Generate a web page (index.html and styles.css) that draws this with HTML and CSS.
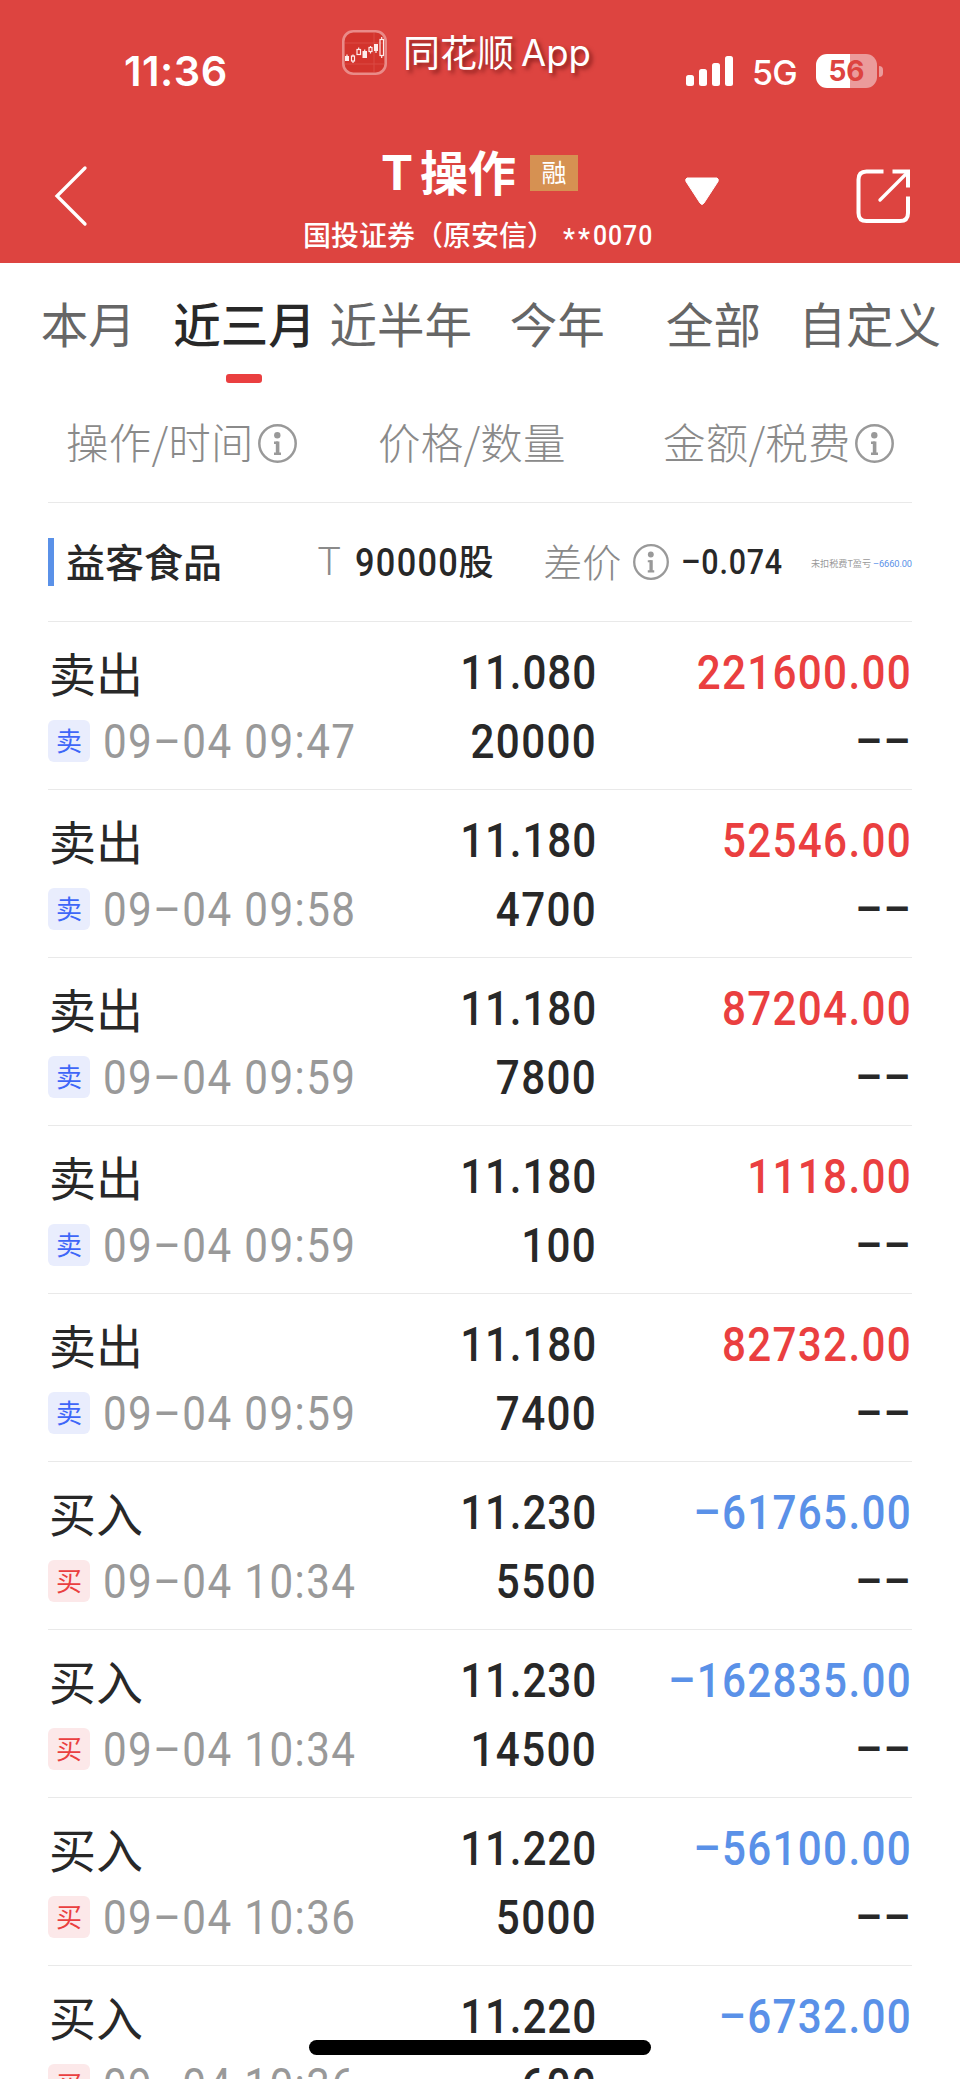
FILE: index.html
```html
<!DOCTYPE html>
<html lang="zh-CN">
<head>
<meta charset="utf-8">
<title>T操作</title>
<link rel="stylesheet" href="styles.css">
</head>
<body>
<svg class="defs" width="0" height="0">
  <symbol id="info" viewBox="0 0 39 39">
    <circle cx="19.5" cy="19.5" r="18.2" fill="none" stroke="#999" stroke-width="2.5"/>
    <circle cx="19.3" cy="11.3" r="3.2" fill="#999"/>
    <path d="M16 18.7h4M16 29.700h7" fill="none" stroke="#999" stroke-width="2.400"/>
    <path d="M19.6 17.500v12" stroke="#999" stroke-width="3.6"/>
  </symbol>
</svg>
<div class="screen">
  <header class="top">
    <div class="status">
      <div class="clock">11:36</div>
      <div class="brand">
        <svg class="logo" viewBox="0 0 45 45" width="45" height="45">
          <rect x="1.3" y="1.3" width="42.4" height="42.4" rx="10" fill="#d3342d" stroke="#ea8b88" stroke-width="2.6"/>
          <path d="M3 13h39M3 34h39M32 3v39" stroke="#db4a45" stroke-width="1"/>
          <g fill="#fdeceb"><rect x="3" y="26" width="4" height="5"/><rect x="20.500" y="21" width="4.500" height="7"/><rect x="32" y="14" width="4" height="7"/></g>
          <g fill="none" stroke="#fdeceb" stroke-width="1.2"><rect x="9.500" y="26" width="3" height="5"/><rect x="15" y="19.500" width="3.500" height="5"/><rect x="27" y="17.500" width="3" height="4"/><rect x="38" y="9.500" width="3.500" height="16"/><path d="M5 24.500v2M11 24.500v2M11 31v2M16.700 17.500v2M22.700 19.500v2M28.500 16v1.500M28.500 21.500v2M34 21v2M39.700 7v2.500M39.700 25.500v2.500"/></g>
        </svg>
        <span class="brand-cn">同花顺</span><span class="brand-en">App</span>
      </div>
      <svg class="signal" viewBox="0 0 47 30" width="47" height="30" fill="#fff">
        <rect x="0" y="19" width="8" height="11" rx="2.500"/><rect x="13" y="13" width="8" height="17" rx="2.500"/><rect x="26" y="7" width="8" height="23" rx="2.500"/><rect x="39" y="0" width="8" height="30" rx="2.500"/>
      </svg>
      <div class="net">5G</div>
      <div class="battery">56</div>
      <div class="nub"></div>
    </div>
    <div class="nav">
      <svg class="back" viewBox="0 0 34 62" width="34" height="62"><path d="M31 3L3 31l28 28" fill="none" stroke="#fff" stroke-width="3.300" stroke-linecap="round"/></svg>
      <div class="heading">
        <div class="title"><span class="title-t">T</span><span class="title-cn">操作</span><span class="tag">融</span></div>
        <div class="account"><span class="broker">国投证券（原安信）</span><span class="stars">**</span><span class="acct-no">0070</span></div>
      </div>
      <svg class="caret" viewBox="0 0 36 30" width="36" height="30"><path d="M3 2h30q2 1 1 3.500L20 27q-2 3-4 0L2 5.500Q1 3 3 2z" fill="#fff" stroke="#fff"/></svg>
      <svg class="share" viewBox="0 0 55 55" width="55" height="55" fill="none" stroke="#fff" stroke-width="4"><path d="M27.500 2.500H10.500q-8 0-8 8v33.500q0 8 8 8h33.500q8 0 8-8V27.500"/><path d="M36.500 2.500H52v16"/><path d="M51 4L24 31" stroke-width="3.400" stroke-linecap="round"/></svg>
    </div>
  </header>

  <nav class="tabs">
    <div class="tab">本月</div><div class="tab active">近三月</div><div class="tab">近半年</div><div class="tab">今年</div><div class="tab">全部</div><div class="tab">自定义</div>
  </nav>

  <main class="content">
    <div class="columns">
      <div class="col c1">操作/时间<svg class="info"><use href="#info"/></svg></div>
      <div class="col c2">价格/数量</div>
      <div class="col c3">金额/税费<svg class="info"><use href="#info"/></svg></div>
    </div>
    <div class="stock">
      <i class="mark"></i>
      <div class="name">益客食品</div>
      <div class="t">T</div>
      <div class="shares">90000</div><div class="unit">股</div>
      <div class="diff">差价</div>
      <svg class="info small" viewBox="0 0 39 39"><use href="#info" width="39" height="39"/></svg>
      <div class="diff-val">–0.074</div>
      <div class="profit">未扣税费T盈亏</div><div class="profit-val">–6660.00</div>
    </div>

    <div class="trade sell"><div class="op">卖出</div><div class="price">11.080</div><div class="amount">221600.00</div><div class="when"><b class="badge">卖</b><span class="time">09–04 09:47</span></div><div class="qty">20000</div><div class="fee">––</div></div>
    <div class="trade sell"><div class="op">卖出</div><div class="price">11.180</div><div class="amount">52546.00</div><div class="when"><b class="badge">卖</b><span class="time">09–04 09:58</span></div><div class="qty">4700</div><div class="fee">––</div></div>
    <div class="trade sell"><div class="op">卖出</div><div class="price">11.180</div><div class="amount">87204.00</div><div class="when"><b class="badge">卖</b><span class="time">09–04 09:59</span></div><div class="qty">7800</div><div class="fee">––</div></div>
    <div class="trade sell"><div class="op">卖出</div><div class="price">11.180</div><div class="amount">1118.00</div><div class="when"><b class="badge">卖</b><span class="time">09–04 09:59</span></div><div class="qty">100</div><div class="fee">––</div></div>
    <div class="trade sell"><div class="op">卖出</div><div class="price">11.180</div><div class="amount">82732.00</div><div class="when"><b class="badge">卖</b><span class="time">09–04 09:59</span></div><div class="qty">7400</div><div class="fee">––</div></div>
    <div class="trade buy"><div class="op">买入</div><div class="price">11.230</div><div class="amount">–61765.00</div><div class="when"><b class="badge">买</b><span class="time">09–04 10:34</span></div><div class="qty">5500</div><div class="fee">––</div></div>
    <div class="trade buy"><div class="op">买入</div><div class="price">11.230</div><div class="amount">–162835.00</div><div class="when"><b class="badge">买</b><span class="time">09–04 10:34</span></div><div class="qty">14500</div><div class="fee">––</div></div>
    <div class="trade buy"><div class="op">买入</div><div class="price">11.220</div><div class="amount">–56100.00</div><div class="when"><b class="badge">买</b><span class="time">09–04 10:36</span></div><div class="qty">5000</div><div class="fee">––</div></div>
    <div class="trade buy"><div class="op">买入</div><div class="price">11.220</div><div class="amount">–6732.00</div><div class="when"><b class="badge">买</b><span class="time">09–04 10:36</span></div><div class="qty">600</div><div class="fee">––</div></div>
  </main>
  <div class="home-bar"></div>
</div>
</body>
</html>
```

FILE: styles.css
```css
* { box-sizing: border-box; }
body { margin: 0; background: #fff; }
.defs { display: block; height: 0; }
.screen {
  position: relative;
  width: 960px;
  height: 2079px;
  overflow: hidden;
  background: #fff;
  color: #282828;
  font-family: Roboto, "Noto Sans CJK SC", sans-serif;
  white-space: nowrap;
}
svg { display: block; flex: none; }

/* Header */
.top { height: 263px; background: #dd4440; color: #fff; }
.status {
  height: 130px;
  display: grid;
  grid-template-columns: 342px 344px 64px 66px 61px 10px;
  align-items: start;
}
.clock { padding: 46px 0 0 124px; font: 600 41.5px/50px Inter, sans-serif; letter-spacing: .5px; }
.brand { display: flex; padding-top: 30px; text-shadow: 3px 3px 4px rgba(70, 0, 0, .55); }
.brand-cn { margin: -4px 0 0 16px; font: 400 37px/50px "Noto Sans CJK SC", sans-serif; }
.brand-en { margin: -2px 0 0 7px; font: 400 36.500px/50px Inter, sans-serif; letter-spacing: 0; }
.signal { margin-top: 56px; }
.net { padding: 52px 0 0 2px; font: 500 34px/42px Inter, sans-serif; letter-spacing: -.8px; }
.battery {
  margin-top: 54px;
  height: 34px;
  border-radius: 11px;
  background: linear-gradient(90deg, #fff 34px, #eb9b9b 34px);
  color: #dd4440;
  font: 700 28px/35px Inter, sans-serif;
  text-align: center;
}
.nub { margin: 66px 0 0 2px; width: 4px; height: 11px; border-radius: 0 5px 5px 0; background: #eb9b9b; }
.nav { display: flex; height: 133px; }
.back { margin: 35px 0 0 54px; }
.heading { width: 352px; margin-left: 215px; text-align: center; }
.title { display: flex; height: 86px; padding-left: 78px; }
.title-t { font: 700 48px/86px Inter, sans-serif; }
.title-cn { margin-left: 7px; font: 700 48px/81px "Noto Sans CJK SC", sans-serif; }
.tag { width: 48px; height: 36px; margin: 25px 0 0 14px; background: #d69152; font: 400 25px/33px "Noto Sans CJK SC", sans-serif; }
.account { display: flex; height: 40px; line-height: 38px; font-weight: 500; }
.broker { font: 500 28px/36px "Noto Sans CJK SC", sans-serif; width: 256px; letter-spacing: 0; text-align: left; }
.stars { width: 41px; margin-left: 8px; font-size: 27px; line-height: 46px; letter-spacing: 3px; text-align: right; }
.acct-no { font-size: 28.500px; line-height: 40px; letter-spacing: 1.1px; transform: scaleX(.87); transform-origin: left; }
.caret { margin: 46px 0 0 29px; }
.share { margin: 39px 0 0 136px; }

/* Period tabs */
.tabs { display: flex; height: 137px; padding: 0 12px 0 10px; }
.tab { flex: 1 1 0; display: flex; flex-direction: column; align-items: center; font: 400 47.500px/119px "Noto Sans CJK SC", sans-serif; color: #666; }
.active { color: #282828; font-weight: 500; }
.active::after { content: ""; width: 36px; height: 9px; margin-top: -8px; border-radius: 3px; background: #ea3f40; }

/* List */
.content { padding: 0 48px; }
.columns { display: grid; grid-template-columns: 312px 285px 1fr; height: 103px; padding-left: 18px; border-bottom: 1px solid #e9e9e9; }
.col { display: flex; font: 300 42.500px/82px "Noto Sans CJK SC", sans-serif; letter-spacing: .2px; color: #8a8a8a; }
.info { width: 39px; height: 39px; margin: 24px 0 0 4px; }
.info.small { width: 36px; height: 36px; margin: 41px 0 0 12px; }
.stock { display: flex; height: 119px; border-bottom: 1px solid #e9e9e9; line-height: 118px; }
.mark { width: 6px; height: 48px; margin-top: 35px; background: #5a91e8; }
.name { width: 264px; padding-left: 12px; font: 500 39px/115px "Noto Sans CJK SC", sans-serif; }
.t { width: 38px; color: #8a8a8a; font-size: 39px; font-weight: 300; }
.shares { width: 103px; font-size: 39.500px; font-weight: 500; letter-spacing: 1.500px; line-height: 119px; transform: scaleX(.87); transform-origin: left; }
.unit { width: 85px; font: 500 35px/114px "Noto Sans CJK SC", sans-serif; }
.diff { width: 78px; color: #8a8a8a; font: 300 39px/115px "Noto Sans CJK SC", sans-serif; }
.diff-val { width: 130px; margin-left: 12px; font-size: 35px; font-weight: 500; letter-spacing: .900px; line-height: 119px; transform: scaleX(.87); transform-origin: left; }
.profit { width: 62px; color: #999; font: 400 9.100px/120px "Noto Sans CJK SC", sans-serif; }
.profit-val { color: #5a91e8; font-size: 9.300px; line-height: 121px; letter-spacing: -.1px; }

.trade {
  display: grid;
  grid-template-columns: 330px 219px 315px;
  grid-template-rows: 67px 70px;
  height: 168px;
  padding-top: 17px;
  border-bottom: 1px solid #e9e9e9;
  font-size: 48.500px;
  line-height: 67px;
}
/* Narrow numerals, anchored to the column edge */
.price, .amount, .qty, .fee {
  font-weight: 500;
  text-align: right;
  letter-spacing: 1.500px;
  transform: scaleX(.87);
  transform-origin: right;
}
.price { letter-spacing: 1px; }
.op { padding-left: 1px; font: 400 47px/65px "Noto Sans CJK SC", sans-serif; }
.when { display: flex; color: #999; line-height: 72px; }
.time { font-weight: 400; letter-spacing: 1.600px; transform: scaleX(.87); transform-origin: left; }
.qty, .fee { line-height: 72px; }
.badge { flex: none; width: 42px; height: 42px; margin: 14px 13px 0 0; border-radius: 6px; font: 400 26px/40px "Noto Sans CJK SC", sans-serif; text-align: center; }
.sell .badge { background: #e9edfd; color: #3e66f8; }
.buy .badge { background: #fce8e9; color: #ea3f40; }
.sell .amount { color: #ea3f40; }
.buy .amount { color: #5a91e8; }

.home-bar { position: absolute; left: 309px; top: 2040px; width: 342px; height: 15px; border-radius: 8px; background: #000; }
```
